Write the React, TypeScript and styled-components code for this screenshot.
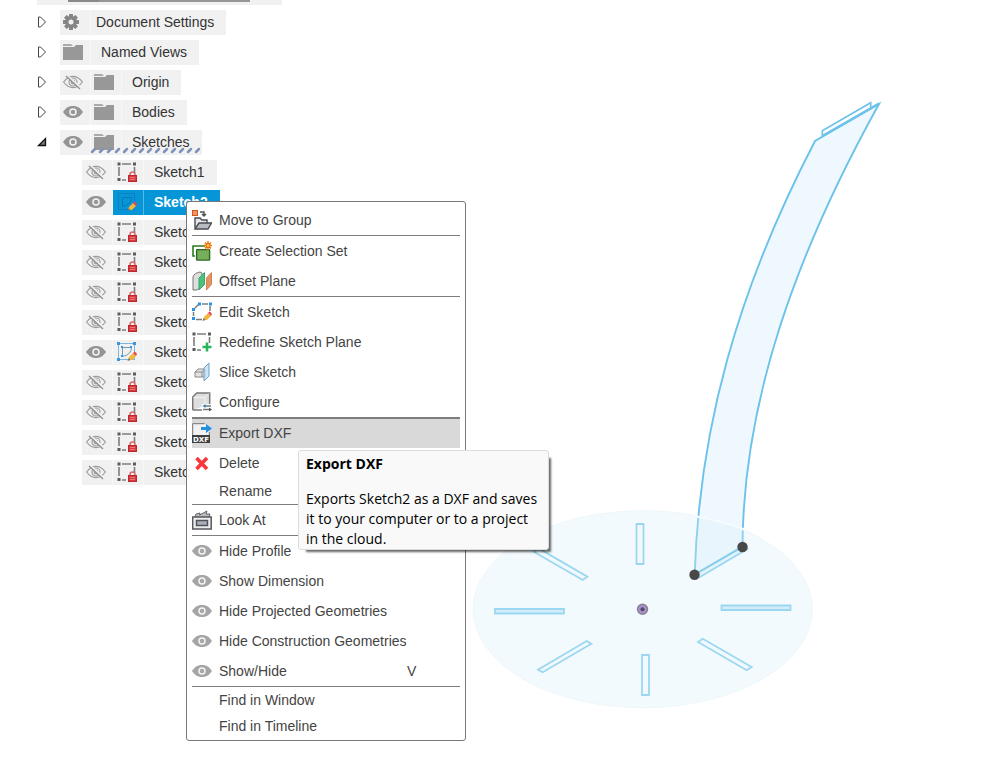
import React from "react";
import styled, { createGlobalStyle, css } from "styled-components";

const GlobalStyle = createGlobalStyle`
  * { box-sizing: border-box; }
  body { margin: 0; background: #fff; font-family: "Liberation Sans", Arial, sans-serif; font-size: 14px; color: #333; }
  button { font: inherit; color: inherit; border: 0; padding: 0; background: none; text-align: left; cursor: pointer; }
  svg { display: block; flex: none; }
  ul { list-style: none; margin: 0; padding: 0; }
`;

const Workspace = styled.main`
  position: relative;
  display: grid;
  grid-template-columns: 466px 1fr;
  min-height: 100vh;
  overflow: hidden;
`;

const Browser = styled.nav`
  display: flex;
  flex-direction: column;
  gap: 5px;
`;

const RootRow = styled.div`
  display: flex;
  width: 245px;
  height: 5px;
  margin-left: 37px;
  padding-left: 31px;
  background: #f1f1f1;
`;

const RootBar = styled.div`
  width: 182px;
  height: 2px;
  background: #969696;
  border-left: 31px solid #8a8a8a;
`;

const TreeList = styled.ul`
  display: flex;
  flex-direction: column;
  gap: 5px;
`;

const TreeRow = styled.li<{ $child?: boolean }>`
  display: flex;
  height: 25px;
  padding-left: ${(p) => (p.$child ? 82 : 36)}px;
`;

const Twisty = styled.button`
  display: flex;
  align-items: center;
  width: 24px;
  padding-bottom: 1px;
`;

const Chip = styled.div`
  position: relative;
  display: flex;
  background: #f1f1f1;
`;

const selectedCell = css`
  background: #0696d7;
  color: #fff;
  font-weight: bold;
`;

const IconCell = styled.button<{ $selected?: boolean; $child?: boolean }>`
  display: flex;
  align-items: center;
  width: 31px;
  padding: 0 0 1px ${(p) => (p.$child ? 4 : 3)}px;
  border-right: 1px solid #f7f7f7;
  ${(p) => p.$selected && selectedCell}
  ${(p) => p.$selected && "border-right-color: #58b8e4;"}
`;

const Label = styled.button<{ $selected?: boolean; $tight?: boolean }>`
  padding: 0 12px 0 ${(p) => (p.$tight ? 5 : 10)}px;
  line-height: 25px;
  white-space: nowrap;
  ${(p) => p.$selected && selectedCell}
`;

const Hatch = styled.svg`
  position: absolute;
  left: 30px;
  top: 16px;
`;

const Canvas = styled.svg`
  width: 100%;
  height: 766px;
`;

const Menu = styled.div`
  position: absolute;
  left: 186px;
  top: 201px;
  width: 280px;
  padding: 3px 5px 1px;
  background: #fff;
  border: 1px solid #787878;
  border-radius: 3px;
  color: #444;
`;

const Separator = styled.hr`
  height: 1px;
  margin: 0;
  border: 0;
  background: #7d7d7d;
`;

const MenuItem = styled.button<{ $plain?: boolean; $active?: boolean }>`
  display: grid;
  grid-template-columns: 20px 188px 1fr;
  column-gap: 7px;
  align-items: center;
  width: 100%;
  height: ${(p) => (p.$plain ? 26 : 30)}px;
  ${(p) => p.$active && "background: #d9d9d9; box-shadow: inset 0 1px #7d7d7d;"}
`;

const MenuText = styled.span`
  grid-column: 2;
  white-space: nowrap;
`;

const Shortcut = styled.kbd`
  font: inherit;
  margin-left: -7px;
`;

const Tooltip = styled.div`
  position: absolute;
  left: 298px;
  top: 450px;
  width: 251px;
  padding: 3px 7px 0;
  background: #f9f9f9;
  border: 1px solid #dcdcdc;
  border-radius: 3px;
  box-shadow: 5px 5px 2px -3px rgba(0, 0, 0, 0.6);
  font-family: "Open Sans", "Noto Sans", sans-serif;
  font-size: 14px;
  line-height: 20px;
  color: #000;
`;

const TipTitle = styled.strong`
  display: block;
  margin-bottom: 15px;
`;

const TipText = styled.p`
  margin: 0;
  white-space: nowrap;
`;

const Icon = ({ children }: { children: React.ReactNode }) => (
  <svg width="20" height="20" viewBox="0 0 20 20" aria-hidden="true">{children}</svg>
);

const Eye = ({ light }: { light?: boolean }) => (
  <Icon>
    <path d="M0 10C3 5.500 6 4 10 4s7 1.500 10 6c-3 4.500-6 6-10 6S3 14.500 0 10Z" fill={light ? "#a5a5a5" : "#959595"} />
    <circle cx="10" cy="10" r="3" fill={light ? "#a5a5a5" : "#959595"} stroke="#f4f4f4" strokeWidth="1.500" />
    <circle cx="10" cy="10" r="1.500" fill={light ? "#aaa" : "#999"} />
  </Icon>
);

const EyeOff = () => (
  <Icon>
    <g fill="none" stroke="#9c9c9c" strokeWidth="1.200">
      <path d="M.6 10C4 5.500 7 4.400 10 4.400s6 1.100 9.400 5.600c-3.400 4.500-6.400 5.600-9.400 5.600S4 14.500.6 10Z" />
      <circle cx="10" cy="10" r="4" />
      <circle cx="10" cy="10" r="1.800" />
    </g>
    <path d="m4 3.500 14 12.500" stroke="#f1f1f1" strokeWidth="2" />
    <path d="m3 4 14 13" stroke="#8c8c8c" strokeWidth="1.200" />
  </Icon>
);

const Folder = () => (
  <Icon>
    <path d="M0 2h8l2 2H0Z" fill="#aaa" />
    <path d="M0 5h11l2-2h7.500v15H0Z" fill="#989898" />
  </Icon>
);

const Gear = () => (
  <svg width="16" height="16" viewBox="0 0 16 16" aria-hidden="true">
    <g fill="#858585">
      {[0, 45, 90, 135].map((a) => (
        <rect key={a} x="6" y="0" width="4" height="16" rx=".5" transform={`rotate(${a} 8 8)`} />
      ))}
    </g>
    <circle cx="8" cy="8" r="4.200" fill="#f1f1f1" stroke="#858585" strokeWidth="3.400" />
  </svg>
);

const Pencil = () => (
  <>
    <path d="m11 18 1-3 4-4 3 3-4 4Z" fill="#f2b63c" />
    <path d="m16 11 1.500-1.500q1 0 2.500 2.500L19 14Z" fill="#ee4450" />
    <path d="m10.500 19 1.200-3 1.800 2Z" fill="#777" />
  </>
);

const Frame = () => (
  <>
    <path d="M5 2h9M2 5v9M5 18h4M17.500 5v6" stroke="#7d7d7d" strokeWidth="1.600" />
    <path d="M.5.500h3v3h-3ZM16 .500h3v3h-3ZM.5 16h3v3h-3Z" fill="#5c5c5c" />
  </>
);

const SketchLock = () => (
  <Icon>
    <Frame />
    <path d="M13 14v-1.500a2.500 2.500 0 0 1 5 0V14" fill="none" stroke="#d9696b" strokeWidth="1.500" />
    <rect x="11.500" y="13.500" width="8" height="6" fill="#d8393f" stroke="#bd2830" />
    <path d="M13 15.500h5M13 17.500h5" stroke="#e9797b" />
  </Icon>
);

const SketchEdit = ({ selected }: { selected?: boolean }) => (
  <Icon>
    <g fill="none" stroke={selected ? "#0a82c2" : "#7fb4dc"}>
      <rect x="1.500" y="1.500" width="16" height="16" />
      <path d="M5.500 5.500h9q0 7-9 9Z" stroke={selected ? "#0879b0" : "#7897ac"} />
    </g>
    {!selected && (
      <g fill="#3796e0">
        <path d="M0 0h3v3H0ZM16 0h3v3h-3ZM0 16h3v3H0ZM4 4h2v2H4ZM13 4h2v2h-2ZM4 13h2v2H4Z" />
      </g>
    )}
    <Pencil />
  </Icon>
);

const MoveIcon = () => (
  <Icon>
    <rect x=".5" y=".5" width="5" height="5" fill="#f19565" stroke="#cf581d" />
    <path d="M8 2h4v3M10 4l2 2 2-2" fill="none" stroke="#555" strokeWidth="1.500" />
    <path d="M3 18V8h5l2 2h5v3" fill="#e5e7eb" stroke="#484c52" strokeWidth="1.400" />
    <path d="m3 19 4-6h12.500L16 19Z" fill="#b8bcc4" stroke="#484c52" strokeWidth="1.400" />
  </Icon>
);

const SelectionIcon = () => (
  <Icon>
    <path d="M3 15H1V5h12" fill="none" stroke="#2d7a20" strokeWidth="1.600" />
    <rect x="4.600" y="8.600" width="13" height="10.500" rx=".5" fill="#78ad5c" stroke="#286b20" strokeWidth="1.400" />
    <path d="M16 0v9M11.500 4.500h9M13 1.500l6 6M19 1.500l-6 6" stroke="#ed7b18" strokeWidth="1.500" />
    <circle cx="16" cy="4.500" r="2" fill="#ffd23a" stroke="#e35f10" />
  </Icon>
);

const PlaneIcon = () => (
  <Icon>
    <path d="M1 19V6q1-4 7-5l2 1v13l-5 4Z" fill="#dedede" stroke="#777" />
    <path d="m7 7 5.500-5.500v12L7 19Z" fill="#49c280" stroke="#39a867" />
    <path d="m14.500 7 5-5.500v12l-5 5.500Z" fill="#e39463" stroke="#d8834f" />
  </Icon>
);

const EditIcon = () => (
  <Icon>
    <path d="M3 6l4-4M10 2h6M18 4v5M1.500 10v4M4 17.500h6" fill="none" stroke="#7d7d7d" strokeWidth="1.500" />
    <path d="M6 .500h3v3H6ZM17 .500h3v3h-3ZM0 6h3v3H0ZM0 15h3v3H0Z" fill="#2692e8" />
    <Pencil />
  </Icon>
);

const RedefineIcon = () => (
  <Icon>
    <Frame />
    <path d="M15 10.500v9M10.500 15h9" stroke="#2bb45a" strokeWidth="2.600" />
  </Icon>
);

const SliceIcon = () => (
  <Icon>
    <path d="M3 15v-5l3-3h7v8Z" fill="#e1e2e4" stroke="#888" />
    <path d="M3 10h7l3-3M10 10v5" fill="none" stroke="#888" />
    <path d="m12 6 5-5v13l-5 5Z" fill="#c4def3" fillOpacity=".8" stroke="#6c9fcb" />
  </Icon>
);

const ConfigureIcon = () => (
  <Icon>
    <path d="M.7 18V5l4-4h13v11M.7 18H11" fill="#ddd" stroke="#777" strokeWidth="1.500" />
    <path d="M1.500 5.500H13l4-4M13 5.500V12" fill="none" stroke="#f2f2f2" />
    <path d="M10 12h10v8H10Z" fill="#fff" />
    <path d="M12 14h7M11 17.500h7" stroke="#777" strokeWidth="1.300" />
    <path d="m10.500 14 3-2v4Z" fill="#2386cf" />
    <path d="m20 17.500-3-2v4Z" fill="#555" />
  </Icon>
);

const DxfIcon = () => (
  <Icon>
    <path d="M1 1h12l4 3v8H1Z" fill="#f2f2f2" />
    <path d="M.7 13V.7h12M17.300 9v4" fill="none" stroke="#777" />
    <path d="M9 4h5V1l6 4.500L14 10V7H9Z" fill="#258fe0" />
    <rect y="12" width="18" height="8" fill="#3f3f3f" />
    <text x="1" y="19" fontFamily="DejaVu Sans, sans-serif" fontSize="7" fontWeight="bold" fill="#fff">DXF</text>
  </Icon>
);

const DeleteIcon = () => (
  <Icon>
    <path d="m4.500 5 10.500 11M15 5 4.500 16" stroke="#f9363b" strokeWidth="3.600" />
  </Icon>
);

const LookIcon = () => (
  <Icon>
    <path d="m3 7 1-3 4-1-.5 2L15 1l-1 3h4l-1 3" fill="#bbb" stroke="#666" />
    <rect x=".7" y="7" width="18.500" height="12" fill="#eee" stroke="#55585e" strokeWidth="1.500" />
    <rect x="4.500" y="10.500" width="11" height="5" fill="#a9aeb8" stroke="#50545a" strokeWidth="1.500" />
  </Icon>
);

const Closed = () => (
  <svg width="12" height="14" viewBox="0 0 12 14" aria-hidden="true">
    <path d="M2.500 2v10h2L9.500 7l-5-5Z" fill="#fff" stroke="#444" />
  </svg>
);

const Open = () => (
  <svg width="12" height="14" viewBox="0 0 12 14" aria-hidden="true">
    <path d="M9.500 3.500v7H2.500Z" fill="#777" stroke="#111" strokeWidth="1.300" />
  </svg>
);

const folders = [
  { name: "Document Settings", icon: <Gear />, tight: true },
  { name: "Named Views", icon: <Folder /> },
  { name: "Origin", eye: <EyeOff />, icon: <Folder /> },
  { name: "Bodies", eye: <Eye />, icon: <Folder /> },
  { name: "Sketches", eye: <Eye />, icon: <Folder />, open: true },
];

const sketches = Array.from({ length: 11 }, (_, i) => ({
  name: `Sketch${i + 1}`,
  selected: i === 1,
  editable: i === 1 || i === 6,
}));

type Entry = { text: string; icon?: React.ReactNode; key?: string; active?: boolean };

const groups: Entry[][] = [
  [{ text: "Move to Group", icon: <MoveIcon /> }],
  [
    { text: "Create Selection Set", icon: <SelectionIcon /> },
    { text: "Offset Plane", icon: <PlaneIcon /> },
  ],
  [
    { text: "Edit Sketch", icon: <EditIcon /> },
    { text: "Redefine Sketch Plane", icon: <RedefineIcon /> },
    { text: "Slice Sketch", icon: <SliceIcon /> },
    { text: "Configure", icon: <ConfigureIcon /> },
  ],
  [
    { text: "Export DXF", icon: <DxfIcon />, active: true },
    { text: "Delete", icon: <DeleteIcon /> },
    { text: "Rename" },
  ],
  [{ text: "Look At", icon: <LookIcon /> }],
  [
    { text: "Hide Profile", icon: <Eye light /> },
    { text: "Show Dimension", icon: <Eye light /> },
    { text: "Hide Projected Geometries", icon: <Eye light /> },
    { text: "Hide Construction Geometries", icon: <Eye light /> },
    { text: "Show/Hide", icon: <Eye light />, key: "V" },
  ],
  [{ text: "Find in Window" }, { text: "Find in Timeline" }],
];

const Model = () => (
  <Canvas viewBox="466 0 515 766" preserveAspectRatio="xMinYMin meet" role="img" aria-label="Sketch geometry">
    <path
      d="M815 141C737 291 699 430 694.700 574.700L742.500 547C743 400 797 252 879 104Z"
      fill="#eff8fe"
      stroke="#6cc2e9"
      strokeWidth="1.900"
    />
    <path d="M822.300 136v-5.300l48.400-28v5.300" fill="#fff" stroke="#6cc2e9" strokeWidth="1.600" />
    <path d="M822.300 136 879 103.500" stroke="#6cc2e9" strokeWidth="2.400" />
    <ellipse cx="642.700" cy="609.200" rx="169.700" ry="98.500" fill="#d9f0fa" fillOpacity=".32" stroke="#eef7fb" />
    <path d="M694 516q28 5 52 14" fill="none" stroke="#f6fbfe" strokeWidth="2" />
    <g fill="#f1f9fd" stroke="#9cd7f1" strokeWidth="1.800">
      <path d="M636.500 524h7v40h-7ZM642 655h7v40h-7Z" />
      <path d="M587.300 576.700l-4.600 3.300-49-28.300 5-3.300ZM698 642l4.700-3.300 49 28.300-5 3.300Z" />
      <path d="M586.700 641l4.600 2.700-48.600 28.600-4.700-2.600Z" />
      <path d="M495 609h69v4.500h-69ZM721.500 605.500h69v4.500h-69Z" fill="#d4ecf8" />
      <path d="M698.700 577.700l-4.700-2.700 48.700-28.700 4.600 2.700Z" fill="#e4f3fb" />
    </g>
    <path d="M694.700 574.700 742.500 547" stroke="#84ccec" strokeWidth="1.500" />
    <circle cx="694.500" cy="574.700" r="5.200" fill="#484848" />
    <circle cx="742.500" cy="547" r="5.200" fill="#484848" />
    <circle cx="642.500" cy="609.300" r="5" fill="#a98fcb" stroke="#888390" strokeWidth="1.500" />
    <circle cx="642.500" cy="609.300" r="2" fill="#514765" />
  </Canvas>
);

export default function App() {
  return (
    <Workspace>
      <GlobalStyle />
      <Browser aria-label="Browser">
        <RootRow><RootBar /></RootRow>
        <TreeList>
          {folders.map((f) => (
            <TreeRow key={f.name}>
              <Twisty aria-label={`Toggle ${f.name}`} aria-expanded={!!f.open}>
                {f.open ? <Open /> : <Closed />}
              </Twisty>
              <Chip>
                {f.eye && <IconCell aria-label={`Visibility of ${f.name}`}>{f.eye}</IconCell>}
                <IconCell aria-label={`${f.name} icon`}>{f.icon}</IconCell>
                <Label $tight={f.tight}>{f.name}</Label>
                {f.open && (
                  <Hatch width="112" height="8" viewBox="0 0 112 8" aria-hidden="true">
                    {Array.from({ length: 14 }, (_, i) => (
                      <path key={i} d={`M${i * 8 + 2} 6l3-3`} stroke="#7f93b8" strokeWidth="2.500" strokeLinecap="round" />
                    ))}
                  </Hatch>
                )}
              </Chip>
            </TreeRow>
          ))}
          {sketches.map((s) => (
            <TreeRow key={s.name} $child>
              <Chip>
                <IconCell $child aria-label={`Visibility of ${s.name}`}>{s.editable ? <Eye /> : <EyeOff />}</IconCell>
                <IconCell $child $selected={s.selected} aria-label={`${s.name} icon`}>
                  {s.editable ? <SketchEdit selected={s.selected} /> : <SketchLock />}
                </IconCell>
                <Label $selected={s.selected}>{s.name}</Label>
              </Chip>
            </TreeRow>
          ))}
        </TreeList>
      </Browser>
      <Model />
      <Menu role="menu">
        {groups.map((group, i) => (
          <React.Fragment key={i}>
            {i > 0 && <Separator />}
            {group.map((item) => (
              <MenuItem key={item.text} role="menuitem" $plain={!item.icon} $active={item.active}>
                {item.icon}
                <MenuText>{item.text}</MenuText>
                {item.key && <Shortcut>{item.key}</Shortcut>}
              </MenuItem>
            ))}
          </React.Fragment>
        ))}
      </Menu>
      <Tooltip role="tooltip">
        <TipTitle>Export DXF</TipTitle>
        <TipText>
          Exports Sketch2 as a DXF and saves<br />
          it to your computer or to a project<br />
          in the cloud.
        </TipText>
      </Tooltip>
    </Workspace>
  );
}
